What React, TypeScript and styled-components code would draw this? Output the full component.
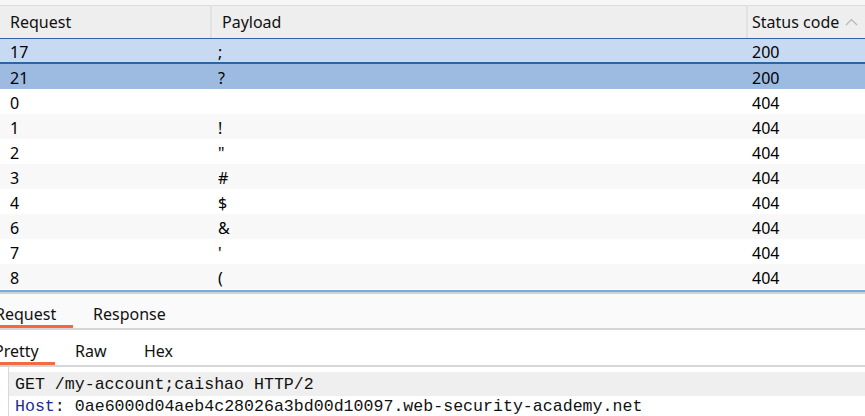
import React from "react";
import styled, { createGlobalStyle } from "styled-components";

const Global = createGlobalStyle`
  html, body { margin: 0; padding: 0; background: #ffffff; }
  body { font-family: "Noto Sans", "Open Sans", sans-serif; color: #000; overflow: hidden; }
`;

const Page = styled.div`
  width: 865px;
  height: 416px;
  display: flex;
  flex-direction: column;
  overflow: hidden;
  & > * { flex-shrink: 0; }
`;

const TopStrip = styled.div`
  height: 5px;
  background: #f6f6f6;
  border-bottom: 1px solid #dcdcdc;
`;

const cols = "212px 536px 1fr";

const HeaderRow = styled.div`
  display: grid;
  grid-template-columns: ${cols};
  height: 32px;
  background: #eeeeee;
`;

const HeaderCell = styled.div<{ $last?: boolean }>`
  display: flex;
  align-items: center;
  justify-content: space-between;
  padding-left: ${(p) => (p.$last ? "4px" : "10px")};
  padding-right: 7px;
  font-size: 16px;
  color: #111;
  border-right: ${(p) => (p.$last ? "none" : "2px solid #e2e2e2")};
`;

const Body = styled.div`
  display: flex;
  flex-direction: column;
  border-top: 1px solid #2f64a2;
`;

type Tone = "sel1" | "sel2" | "white" | "gray";

const rowBg: Record<Tone, string> = {
  sel1: "#c8daf1",
  sel2: "#9dbbe1",
  white: "#ffffff",
  gray: "#f8f8f8",
};

const Row = styled.div<{ $tone: Tone }>`
  display: grid;
  grid-template-columns: ${cols};
  flex-shrink: 0;
  height: ${(p) => (p.$tone === "sel1" ? "23px" : "25px")};
  background: ${(p) => rowBg[p.$tone]};
  border-bottom: ${(p) => (p.$tone === "sel1" ? "2px solid #2f64a2" : "none")};
  font-size: 16px;
  color: #000;
`;

const Cell = styled.div<{ $pad: number }>`
  display: flex;
  align-items: center;
  padding-left: ${(p) => p.$pad}px;
  padding-top: 2px;
  line-height: 1;
`;

const TableEnd = styled.div`
  height: 2px;
  background: #7aa9dc;
  border-bottom: 2px solid #d2d2d2;
  margin-top: 1px;
`;

const TabBar = styled.div<{ $bg: string; $h: number }>`
  display: flex;
  height: ${(p) => p.$h}px;
  background: ${(p) => p.$bg};
  border-bottom: 2px solid #d6d6d6;
  align-items: stretch;
`;

const Tab = styled.div<{ $active?: boolean; $w: number; $offset?: number; $top: number }>`
  width: ${(p) => p.$w}px;
  box-sizing: border-box;
  display: flex;
  align-items: center;
  font-size: 16px;
  color: #111;
  padding-left: ${(p) => p.$offset ?? 0}px;
  padding-top: ${(p) => p.$top}px;
  border-bottom: 3px solid ${(p) => (p.$active ? "#f26a3d" : "transparent")};
  white-space: nowrap;
  overflow: visible;
`;

const CutLabel = styled.span<{ $shift: number }>`
  margin-left: ${(p) => -p.$shift}px;
`;

const Editor = styled.div`
  flex: 1;
  display: flex;
`;

const Gutter = styled.div`
  width: 8px;
  border-right: 1px solid #d8d8d8;
`;

const Code = styled.div`
  flex: 1;
  padding-top: 5px;
  font-family: "Liberation Mono", "DejaVu Sans Mono", monospace;
  font-size: 16.6px;
  color: #111;
`;

const CodeLine = styled.div<{ $hl?: boolean }>`
  height: ${(p) => (p.$hl ? "24px" : "20px")};
  box-sizing: border-box;
  display: flex;
  align-items: center;
  padding-left: 6px;
  padding-top: ${(p) => (p.$hl ? "1px" : "0px")};
  background: ${(p) => (p.$hl ? "#efefef" : "transparent")};
  white-space: pre;
`;

const Key = styled.span`
  color: #1d2a8f;
`;

const Chevron = () => (
  <svg width="13" height="8" viewBox="0 0 13 8" fill="none">
    <path d="M1 7 L6.5 1.5 L12 7" stroke="#b5b5b5" strokeWidth="1.2" />
  </svg>
);

const rows: { req: string; payload: string; status: string; tone: Tone }[] = [
  { req: "17", payload: ";", status: "200", tone: "sel1" },
  { req: "21", payload: "?", status: "200", tone: "sel2" },
  { req: "0", payload: "", status: "404", tone: "white" },
  { req: "1", payload: "!", status: "404", tone: "gray" },
  { req: "2", payload: "\"", status: "404", tone: "white" },
  { req: "3", payload: "#", status: "404", tone: "gray" },
  { req: "4", payload: "$", status: "404", tone: "white" },
  { req: "6", payload: "&", status: "404", tone: "gray" },
  { req: "7", payload: "'", status: "404", tone: "white" },
  { req: "8", payload: "(", status: "404", tone: "gray" },
];

export default function App() {
  return (
    <Page>
      <Global />
      <TopStrip />
      <HeaderRow>
        <HeaderCell>Request</HeaderCell>
        <HeaderCell>Payload</HeaderCell>
        <HeaderCell $last>
          Status code <Chevron />
        </HeaderCell>
      </HeaderRow>
      <Body>
        {rows.map((r, i) => (
          <Row key={i} $tone={r.tone}>
            <Cell $pad={10}>{r.req}</Cell>
            <Cell $pad={6}>{r.payload}</Cell>
            <Cell $pad={4}>{r.status}</Cell>
          </Row>
        ))}
      </Body>
      <TableEnd />
      <TabBar $bg="#fafafa" $h={34}>
        <Tab $active $w={73} $top={8}>
          <CutLabel $shift={5}>Request</CutLabel>
        </Tab>
        <Tab $w={120} $offset={20} $top={8}>Response</Tab>
      </TabBar>
      <TabBar $bg="#ffffff" $h={35}>
        <Tab $active $w={55} $top={10}>
          <CutLabel $shift={6}>Pretty</CutLabel>
        </Tab>
        <Tab $w={69} $offset={20} $top={10}>Raw</Tab>
        <Tab $w={80} $offset={20} $top={10}>Hex</Tab>
      </TabBar>
      <Editor>
        <Gutter />
        <Code>
          <CodeLine $hl>GET /my-account;caishao HTTP/2</CodeLine>
          <CodeLine>
            <Key>Host</Key>: 0ae6000d04aeb4c28026a3bd00d10097.web-security-academy.net
          </CodeLine>
        </Code>
      </Editor>
    </Page>
  );
}
